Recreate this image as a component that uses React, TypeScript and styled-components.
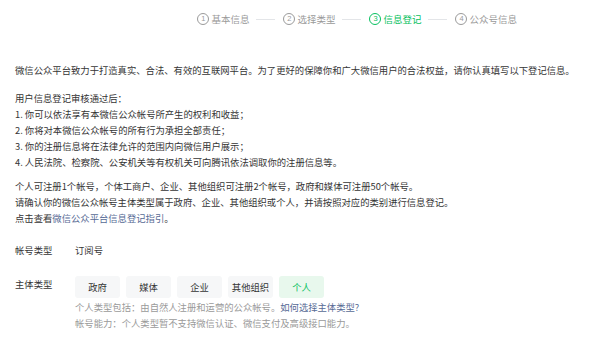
import React, { useState } from "react";
import styled, { createGlobalStyle } from "styled-components";

const GlobalStyle = createGlobalStyle`
  body {
    margin: 0;
    background: #ffffff;
    font-family: "Microsoft YaHei", "Noto Sans CJK SC", "Noto Sans", sans-serif;
    color: #353535;
  }
`;

const steps = ["基本信息", "选择类型", "信息登记", "公众号信息"];
const subjects = ["政府", "媒体", "企业", "其他组织", "个人"];

const App = () => {
  const [subject, setSubject] = useState("个人");
  const current = 2;

  return (
    <>
      <GlobalStyle />
      <Page>
        <StepBar>
          {steps.map((s, i) => (
            <React.Fragment key={s}>
              {i > 0 && <Connector />}
              <Step active={i === current}>
                <Num active={i === current}>{i + 1}</Num>
                {s}
              </Step>
            </React.Fragment>
          ))}
        </StepBar>

        <Content>
          <Para>
            微信公众平台致力于打造真实、合法、有效的互联网平台。为了更好的保障你和广大微信用户的合法权益，请你认真填写以下登记信息。
          </Para>
          <Para gap={12}>
            用户信息登记审核通过后：
            <br />
            1. 你可以依法享有本微信公众帐号所产生的权利和收益；
            <br />
            2. 你将对本微信公众帐号的所有行为承担全部责任；
            <br />
            3. 你的注册信息将在法律允许的范围内向微信用户展示；
            <br />
            4. 人民法院、检察院、公安机关等有权机关可向腾讯依法调取你的注册信息等。
          </Para>
          <Para gap={8}>
            个人可注册1个帐号，个体工商户、企业、其他组织可注册2个帐号，政府和媒体可注册50个帐号。
            <br />
            请确认你的微信公众帐号主体类型属于政府、企业、其他组织或个人，并请按照对应的类别进行信息登记。
            <br />
            点击查看<Link>微信公众平台信息登记指引</Link>。
          </Para>

          <FormRow gap={16}>
            <Label>帐号类型</Label>
            <Value>订阅号</Value>
          </FormRow>

          <FormRow gap={15}>
            <Label>主体类型</Label>
            <Field>
              <Options>
                {subjects.map((s) => (
                  <Option
                    key={s}
                    selected={s === subject}
                    onClick={() => setSubject(s)}
                  >
                    {s}
                  </Option>
                ))}
              </Options>
              <Hint>
                个人类型包括：由自然人注册和运营的公众帐号。
                <Link>如何选择主体类型?</Link>
                <br />
                帐号能力：个人类型暂不支持微信认证、微信支付及高级接口能力。
              </Hint>
            </Field>
          </FormRow>
        </Content>
      </Page>
    </>
  );
};

export default App;

const Page = styled.div`
  width: 600px;
  height: 340px;
  overflow: hidden;
  font-size: 9.33px;
  line-height: 16px;
`;

const StepBar = styled.div`
  height: 38px;
  display: flex;
  align-items: center;
  justify-content: flex-end;
  padding-right: 83px;
`;

const Step = styled.div<{ active?: boolean }>`
  display: flex;
  align-items: center;
  gap: 2px;
  color: ${({ active }) => (active ? "#07c160" : "#9a9a9a")};
  font-size: 9.5px;
  white-space: nowrap;
`;

const Num = styled.span<{ active?: boolean }>`
  width: 10px;
  height: 10px;
  border-radius: 50%;
  border: 1px solid ${({ active }) => (active ? "#07c160" : "#9a9a9a")};
  display: flex;
  align-items: center;
  justify-content: center;
  font-family: "Liberation Sans", sans-serif;
  font-size: 7.5px;
  line-height: 1;
`;

const Connector = styled.div`
  width: 19px;
  height: 1px;
  background-color: #e3e5e8;
  margin: 0 8px 0 7px;
`;

const Content = styled.div`
  padding: 24px 15px 0;
`;

const Para = styled.p<{ gap?: number }>`
  margin: ${({ gap }) => gap ?? 0}px 0 0;
`;

const Link = styled.span`
  color: #576b95;
  cursor: pointer;
`;

const FormRow = styled.div<{ gap: number }>`
  display: flex;
  align-items: flex-start;
  margin-top: ${({ gap }) => gap}px;
`;

const Label = styled.div`
  width: 60px;
  flex-shrink: 0;
  line-height: 22px;
  margin-top: -3px;
`;

const Value = styled.div`
  line-height: 16px;
`;

const Field = styled.div`
  display: flex;
  flex-direction: column;
`;

const Options = styled.div`
  display: flex;
  gap: 6px;
`;

const Option = styled.div<{ selected?: boolean }>`
  width: 45px;
  height: 22px;
  border-radius: 3px;
  display: flex;
  align-items: center;
  justify-content: center;
  white-space: nowrap;
  cursor: pointer;
  background-color: ${({ selected }) => (selected ? "#e8f8ed" : "#f6f7f8")};
  color: ${({ selected }) => (selected ? "#07c160" : "#353535")};
`;

const Hint = styled.div`
  margin-top: 1px;
  color: #9a9a9a;
`;
